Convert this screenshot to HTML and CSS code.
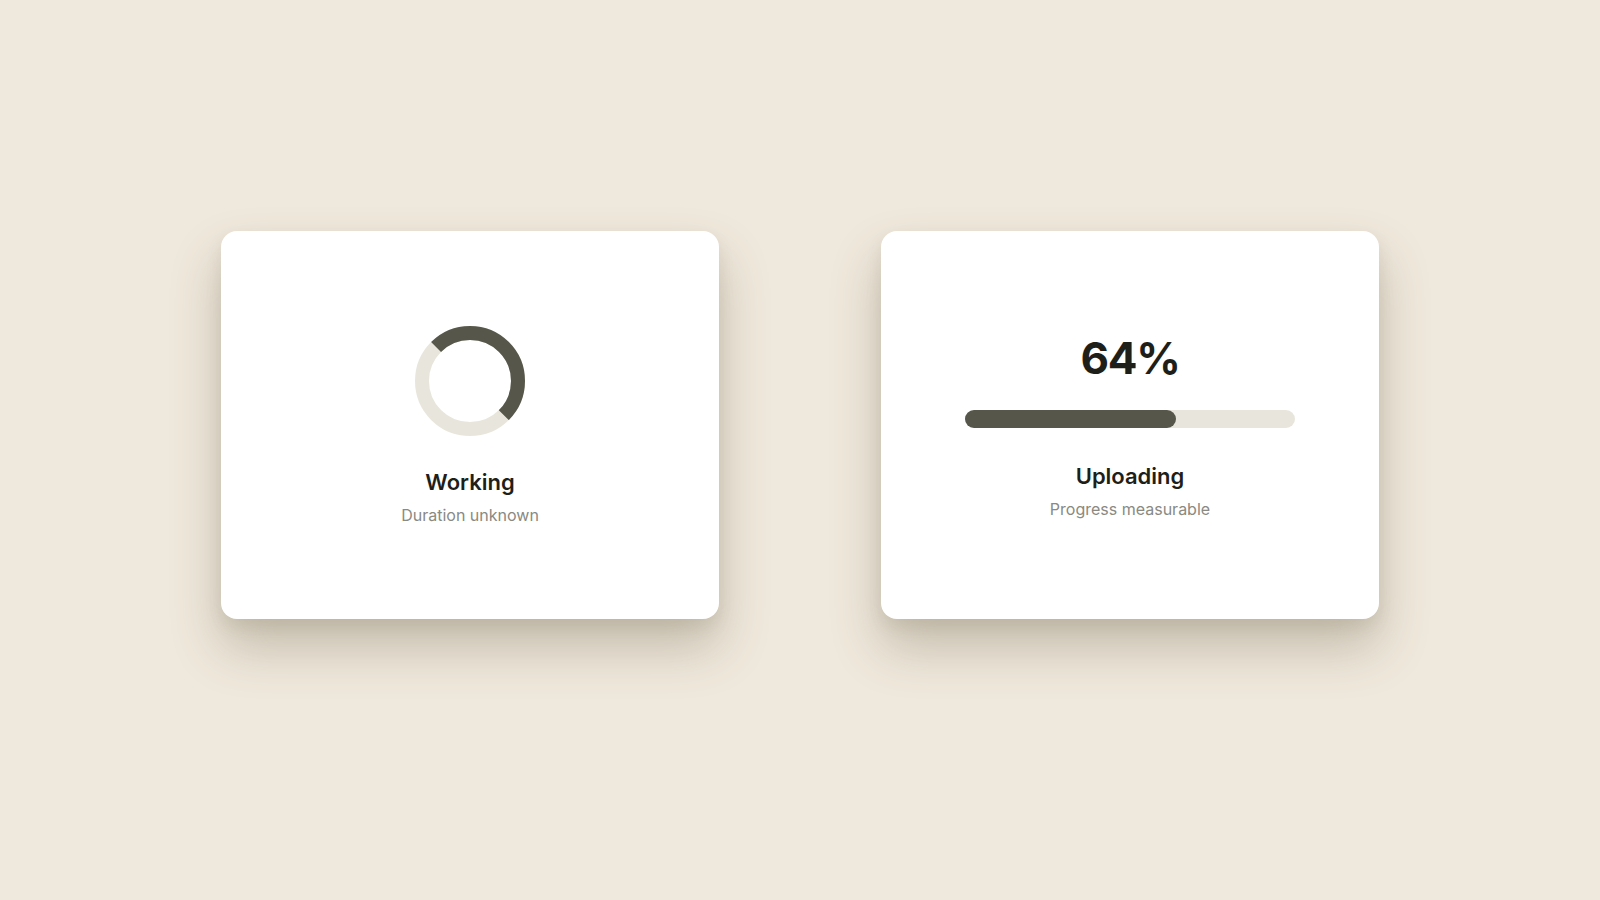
FILE: index.html
```html
<!DOCTYPE html>
<html lang="en">
<head>
    <meta charset="UTF-8">
    <meta name="viewport" content="width=device-width, initial-scale=1.0">
    <title>Loading states</title>
    <link rel="stylesheet" href="styles.css">
</head>
<body>
    <div class="stage">
        <div class="card">
            <svg class="spinner" width="110" height="110" viewBox="0 0 110 110">
                <circle class="spinner-track" cx="55" cy="55" r="48"></circle>
                <!-- half of the ring, starting at upper left -->
                <circle class="spinner-arc" cx="55" cy="55" r="48"
                        stroke-dasharray="150.8 301.6" transform="rotate(-135 55 55)"></circle>
            </svg>
            <div class="title">Working</div>
            <div class="subtitle">Duration unknown</div>
        </div>

        <div class="card">
            <div class="percent">64%</div>
            <div class="bar">
                <div class="bar-fill" style="width: 64%;"></div>
            </div>
            <div class="title">Uploading</div>
            <div class="subtitle">Progress measurable</div>
        </div>
    </div>
</body>
</html>
```

FILE: styles.css
```css
body {
    margin: 0;
    background-color: #efe8dc;
    font-family: Inter, "Noto Sans", sans-serif;
    color: #1f1f1a;
}
.stage {
    min-height: 100vh;
    box-sizing: border-box;
    padding-bottom: 50px;
    display: flex;
    align-items: center;
    justify-content: center;
    gap: 162px;
}
.card {
    width: 498px;
    height: 388px;
    box-sizing: border-box;
    padding-top: 2px;
    background-color: #fff;
    border-radius: 16px;
    box-shadow: 0 28px 50px rgba(95, 85, 60, 0.3), 0 8px 16px rgba(95, 85, 60, 0.1);
    display: flex;
    flex-direction: column;
    align-items: center;
    justify-content: center;
    text-align: center;
}
.spinner {
    display: block;
    margin-bottom: 32px;
}
.spinner circle {
    fill: none;
    stroke-width: 14;
}
.spinner-track {
    stroke: #e8e6dc;
}
.spinner-arc {
    stroke: #56564b;
}
.title {
    font-size: 22px;
    line-height: 28px;
    font-weight: 600;
    margin-bottom: 8px;
}
.subtitle {
    font-size: 16px;
    line-height: 22px;
    color: #8a8982;
}
.percent {
    font-size: 44px;
    line-height: 53px;
    font-weight: 700;
    letter-spacing: -0.03em;
    margin-bottom: 25px;
}
.bar {
    width: 330px;
    height: 18px;
    border-radius: 9px;
    background-color: #e8e6dc;
    margin-bottom: 34px;
}
.bar-fill {
    height: 100%;
    border-radius: 9px;
    background-color: #56564b;
}
```
